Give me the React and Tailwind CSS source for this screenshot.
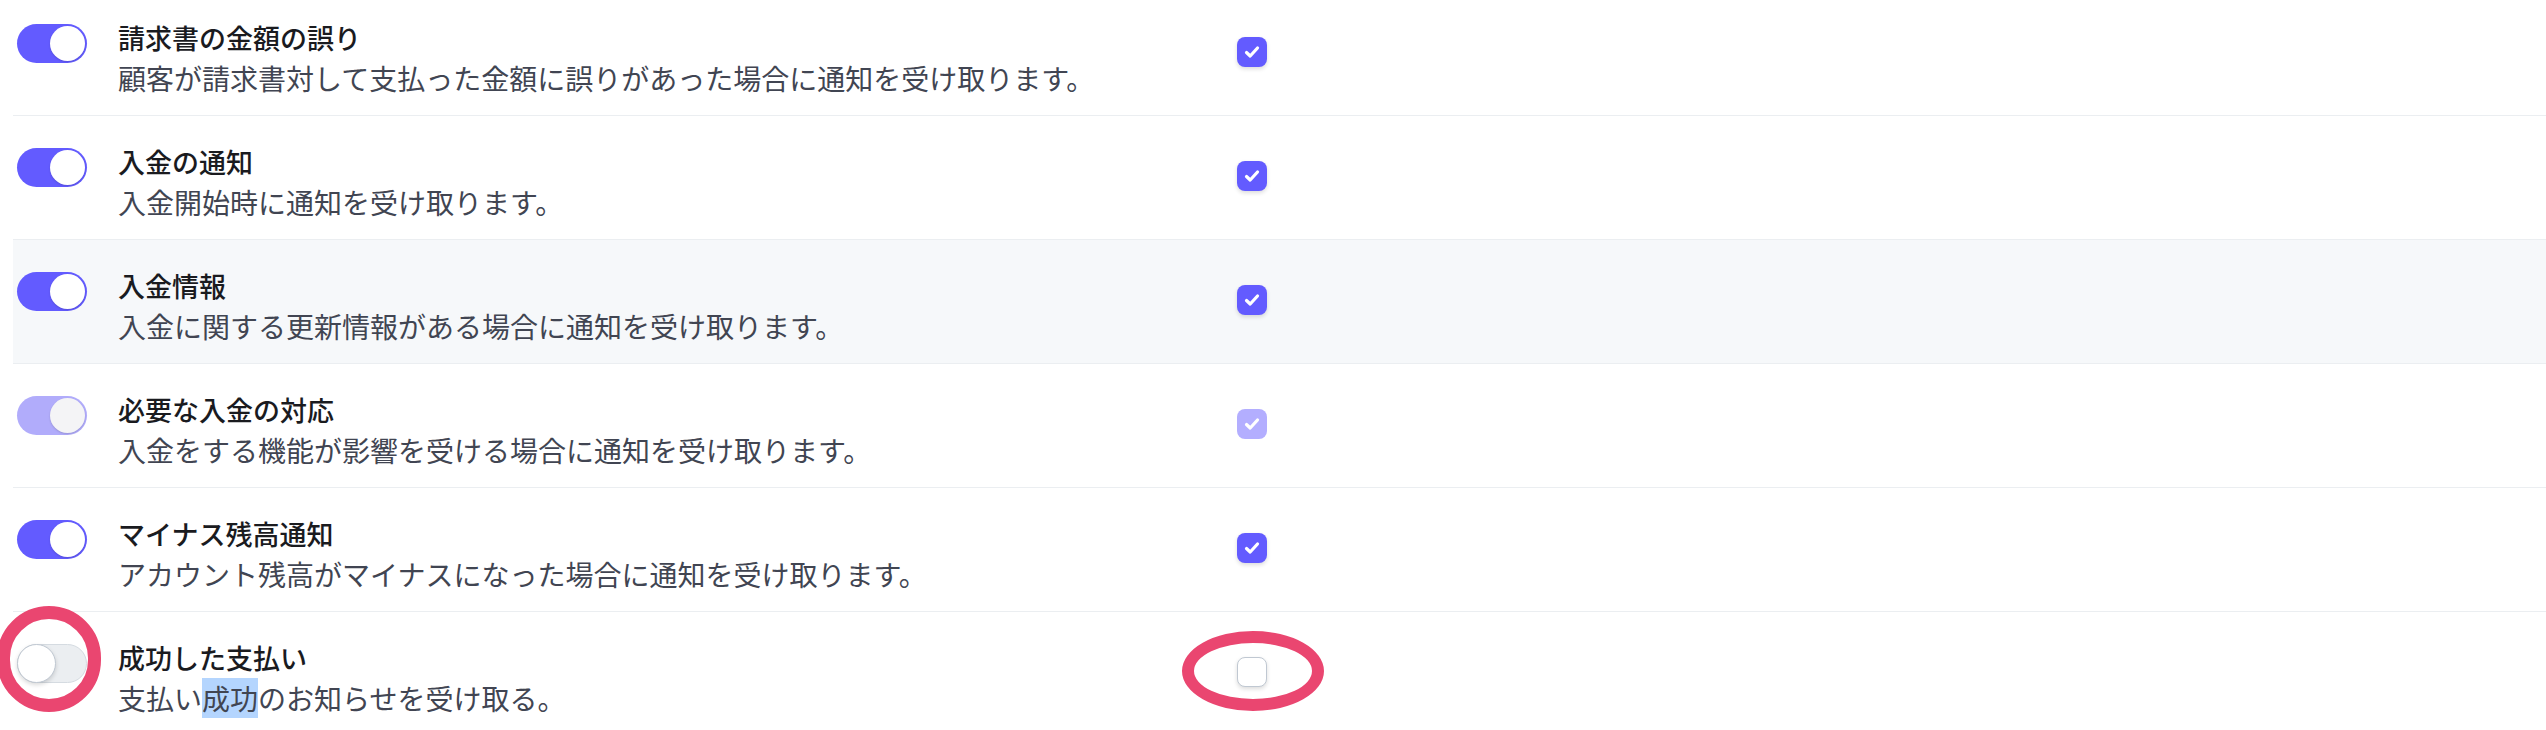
import React from 'react'

const rows = [
  { title: '請求書の金額の誤り', desc: '顧客が請求書対して支払った金額に誤りがあった場合に通知を受け取ります。', state: 'on' },
  { title: '入金の通知', desc: '入金開始時に通知を受け取ります。', state: 'on' },
  { title: '入金情報', desc: '入金に関する更新情報がある場合に通知を受け取ります。', state: 'on', hover: true },
  { title: '必要な入金の対応', desc: '入金をする機能が影響を受ける場合に通知を受け取ります。', state: 'disabled' },
  { title: 'マイナス残高通知', desc: 'アカウント残高がマイナスになった場合に通知を受け取ります。', state: 'on' },
  { title: '成功した支払い', desc: null, state: 'off', marked: true },
]

function Toggle({ state }) {
  if (state === 'off') {
    return (
      <div className="w-[70px] h-[39px] rounded-full bg-[#ebeef1] border border-[#d5dbe1] flex items-center justify-start">
        <div className="w-[39px] h-[39px] -ml-px rounded-full bg-white border border-[#c0c8d2] shadow-[0_2px_4px_rgba(0,0,0,0.15)]" />
      </div>
    )
  }
  const disabled = state === 'disabled'
  return (
    <div
      className={[
        'w-[70px] h-[39px] rounded-full flex items-center justify-end p-[2px]',
        disabled ? 'bg-[#b1acfb]' : 'bg-[#635bff]',
      ].join(' ')}
    >
      <div
        className={[
          'w-[35px] h-[35px] rounded-full shadow-[0_1px_2px_rgba(0,0,0,0.15)]',
          disabled ? 'bg-[#f4f4f6]' : 'bg-white',
        ].join(' ')}
      />
    </div>
  )
}

function Checkbox({ state }) {
  if (state === 'off') {
    return (
      <div className="w-[30px] h-[30px] rounded-[8px] bg-white border border-[#c0c8d2] shadow-[0_2px_4px_rgba(0,0,0,0.14)]" />
    )
  }
  const disabled = state === 'disabled'
  return (
    <div
      className={[
        'w-[30px] h-[30px] rounded-[8px] flex items-center justify-center',
        disabled ? 'bg-[#b3aeff]' : 'bg-[#635bff] shadow-[0_2px_4px_rgba(0,0,0,0.14)]',
      ].join(' ')}
    >
      <svg width="18" height="18" viewBox="0 0 18 18" fill="none">
        <path d="M3.5 9.5 L7.2 13 L14.5 5" stroke="white" strokeWidth="3.2" strokeLinecap="round" strokeLinejoin="round" />
      </svg>
    </div>
  )
}

export default function App() {
  return (
    <div
      className="w-[2546px] h-[730px] overflow-hidden bg-white relative"
      style={{ fontFamily: '"Noto Sans CJK JP", "Noto Sans", sans-serif' }}
    >
      <div className="ml-[13px] -mt-[8px]">
        {rows.map((row, i) => (
          <div
            key={i}
            className={[
              'flex items-start h-[124px] pt-[26px] border-b border-[#ebeef1]',
              row.hover ? 'bg-[#f6f8fa]' : 'bg-white',
            ].join(' ')}
          >
            {/* Toggle */}
            <div className="relative ml-[4px] mt-[6px] shrink-0">
              <Toggle state={row.state} />
              {row.marked && (
                <div className="absolute -left-[20px] -top-[38px] w-[104px] h-[106px] rounded-full border-[13px] border-[#ea4670]" />
              )}
            </div>

            {/* Text */}
            <div className="ml-[31px] w-[1119px] shrink-0">
              <div className="text-[27px] leading-[40px] font-medium text-[#1a1b1f]">{row.title}</div>
              <div className="text-[28px] leading-[40px] text-[#414552]">
                {row.desc ?? (
                  <>
                    支払い<span className="bg-[#b4d5fe]">成功</span>のお知らせを受け取る。
                  </>
                )}
              </div>
            </div>

            {/* Checkbox */}
            <div className="relative mt-[19px] shrink-0">
              <Checkbox state={row.state} />
              {row.marked && (
                <div className="absolute -left-[55px] -top-[26px] w-[142px] h-[80px] rounded-[50%] border-[12px] border-[#ea4670]" />
              )}
            </div>
          </div>
        ))}
      </div>
    </div>
  )
}
